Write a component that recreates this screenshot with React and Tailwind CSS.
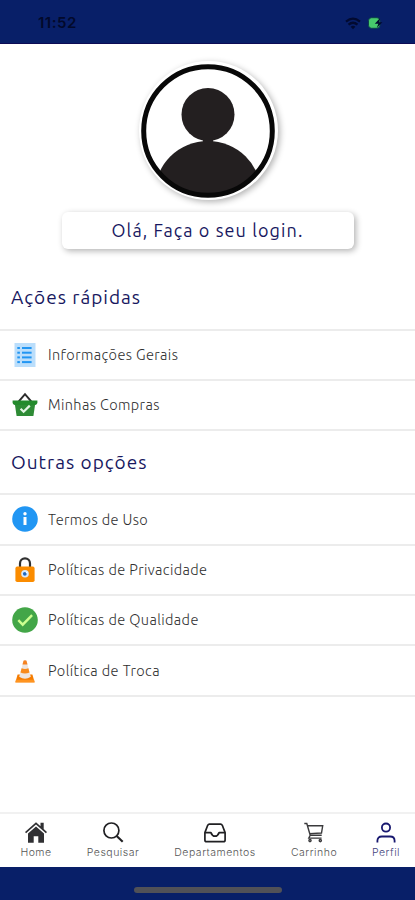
import { useState } from 'react';

/* ─────────── ícones da lista ─────────── */
const ListIcon = () => (
  <svg viewBox="0 0 26 26" className="size-[26px]">
    <rect x="2.5" y="1" width="21" height="24" fill="#bbdefb" />
    <g fill="#2196f3">
      <rect x="5.3" y="5" width="2.6" height="2" />
      <rect x="10" y="5" width="9.6" height="2" />
      <rect x="5.3" y="9.7" width="2.6" height="2" />
      <rect x="10" y="9.7" width="9.6" height="2" />
      <rect x="5.3" y="14.4" width="2.6" height="2" />
      <rect x="10" y="14.4" width="9.6" height="2" />
      <rect x="5.3" y="19.1" width="2.6" height="2" />
      <rect x="10" y="19.1" width="9.6" height="2" />
    </g>
  </svg>
);

const BasketIcon = () => (
  <svg viewBox="0 0 26 26" className="size-[26px]">
    <path d="M6.8 9.4 13 2.2l6.2 7.2" fill="none" stroke="#2b2b2b" strokeWidth="2" />
    <path d="M2.6 10.5h20.8l-2 13.4H4.6z" fill="#2e8b35" />
    <path d="M.6 8.5h24.8v2.6q-.4 1.4-2 1.8H2.6Q1 12.500 .6 11.100z" fill="#238a2c" />
    <path d="m8.6 16.8 3 3 6.2-6.2" fill="none" stroke="#e3f5e4" strokeWidth="2.2" />
  </svg>
);

const InfoIcon = () => (
  <svg viewBox="0 0 26 26" className="size-[26px]">
    <circle cx="13" cy="13" r="12.8" fill="#2196f3" />
    <circle cx="13" cy="7.8" r="1.7" fill="#fff" />
    <rect x="11.5" y="11" width="3" height="8" fill="#fff" />
  </svg>
);

const LockIcon = () => (
  <svg viewBox="0 0 26 26" className="size-[26px]">
    <path d="M8 11V6.4a5 5 0 0 1 10 0V11" fill="none" stroke="#303030" strokeWidth="2.2" />
    <rect x="3.4" y="9.6" width="19.2" height="15.4" rx="1.8" fill="#fb8c00" />
    <circle cx="13" cy="16.8" r="3.8" fill="#d6eaff" />
    <circle cx="12.8" cy="16.8" r="1.9" fill="#2169bd" />
    <circle cx="14.6" cy="15.6" r=".8" fill="#fff" />
  </svg>
);

const CheckIcon = () => (
  <svg viewBox="0 0 26 26" className="size-[26px]">
    <circle cx="13" cy="13" r="12.8" fill="#43a648" />
    <path d="m6.3 13.2 4.4 4.5 9.4-9.6" fill="none" stroke="#ccff90" strokeWidth="2.4" />
  </svg>
);

const ConeIcon = () => (
  <svg viewBox="0 0 26 26" className="size-[26px]">
    <path d="M5.6 16.5h14.8l2.2 7.7H3.4z" fill="#f57c00" />
    <path d="M3.9 21.8h18.2l.5 2.8H3.4z" fill="#ff9420" />
    <path d="M11.8 2.3h2.4L18.8 18.8q-5.8 3.8-11.6 0z" fill="#eee5df" />
    <path d="M11.5 2.8q1.5-1.2 3 0l1 3.7h-5z" fill="#f58220" />
    <path d="M9.6 10.2q3.4 1.5 6.8 0l1.1 4.2q-4.5 2.2-9 0z" fill="#f88a1b" />
  </svg>
);

/* ─────────── ícones do menu inferior ─────────── */
const HomeIcon = () => (
  <svg viewBox="0 0 24 24" className="size-6" fill="#303033">
    <path d="M12 1.2 1 11l1.1 1.3L12 3.6l9.9 8.7L23 11l-3.3-3V1.8h-3.2v3.4z" />
    <path d="M12 5.4 4 12.5v9.3h5.7v-6.6h4.6v6.6H20v-9.3z" />
  </svg>
);

const SearchIcon = () => (
  <svg viewBox="0 0 24 24" className="size-6" fill="none" stroke="#202023" strokeWidth="1.7">
    <circle cx="10.4" cy="9.5" r="7.5" />
    <path d="m15.7 14.9 6 5.8" strokeWidth="2.1" />
  </svg>
);

const InboxIcon = () => (
  <svg viewBox="0 0 24 24" className="size-6" fill="none" stroke="#202023" strokeWidth="1.7" strokeLinejoin="round">
    <path d="M6.4 3.2h11.2q1.1 0 1.7 1.1l2.8 7.3v7.3q0 1.8-1.8 1.8H3.700q-1.800 0-1.800-1.800v-7.300l2.800-7.300q.6-1.100 1.700-1.100z" />
    <path d="M1.900 11.600h6q1.300 3.600 4.100 3.600t4.100-3.600h6" />
  </svg>
);

const CartIcon = () => (
  <svg viewBox="0 0 24 24" className="size-6" fill="none" stroke="#3a3a3c" strokeWidth="1.4">
    <path d="M2.3 2.500h2.500L8.200 14.200h11.500M5.800 4.800h14.900l-1.200 7.200L7.600 12.600M8.200 14.200l-1.400 2.900h12.800" />
    <circle cx="8" cy="19.600" r="1.100" />
    <circle cx="18.300" cy="19.600" r="1.100" />
  </svg>
);

const UserIcon = () => (
  <svg viewBox="0 0 24 24" className="size-6" fill="none" stroke="#18186f" strokeWidth="1.8">
    <circle cx="12" cy="6.600" r="4.100" />
    <path d="M3.400 21.500v-1.700q0-4.300 4.500-4.300h8.200q4.500 0 4.500 4.300v1.700" />
  </svg>
);

/* ─────────── dados ─────────── */
const quick = [
  { label: 'Informações Gerais', Icon: ListIcon },
  { label: 'Minhas Compras', Icon: BasketIcon },
];

const others = [
  { label: 'Termos de Uso', Icon: InfoIcon },
  { label: 'Políticas de Privacidade', Icon: LockIcon },
  { label: 'Políticas de Qualidade', Icon: CheckIcon },
  { label: 'Política de Troca', Icon: ConeIcon },
];

const tabs = [
  { label: 'Home', Icon: HomeIcon, box: 'w-[72px]' },
  { label: 'Pesquisar', Icon: SearchIcon, box: 'w-[82px]' },
  { label: 'Departamentos', Icon: InboxIcon, box: 'w-[122px]' },
  { label: 'Carrinho', Icon: CartIcon, box: 'w-[76px]' },
  { label: 'Perfil', Icon: UserIcon, box: 'w-[63px] pl-[5px]' },
];

const Section = ({ title, items }) => (
  <section>
    <h2 className="h-[62px] pl-[11px] pt-[15.5px] text-[19px] leading-[30px] tracking-[1px] text-[#18185f]">{title}</h2>
    <ul className="border-t-2 border-[#ececec]">
      {items.map(({ label, Icon }) => (
        <li key={label} className="flex h-[50.4px] items-center border-b-2 border-[#ececec] pl-3">
          <Icon />
          <span className="ml-[10px] text-[14.5px] font-light tracking-[0.4px] text-[#303030]">{label}</span>
        </li>
      ))}
    </ul>
  </section>
);

export default function App() {
  const [active, setActive] = useState('Perfil');

  return (
    <div className="flex h-[900px] w-[415px] flex-col overflow-hidden bg-white font-['Ubuntu','Noto_Sans',sans-serif]">
      <header className="flex h-11 shrink-0 items-center justify-between border-b border-[#0d0b55] bg-[#081f68] pl-[38px] pr-[31px] pt-[3px]">
        <span className="font-['Inter',sans-serif] text-[15px] font-semibold tracking-[0.5px] text-[#02092b]">11:52</span>
        <div className="flex items-center gap-[7px]">
          <svg viewBox="0 0 16 13" className="h-[13px] w-4" fill="none" stroke="#020a30" strokeWidth="2.2">
            <path d="M1 4.6q7-5.8 14 0M3.5 7.6q4.5-3.7 9 0" />
            <path d="m5.6 9.7 2.4 2.6 2.4-2.6q-2.4-1.8-4.8 0z" fill="#020a30" stroke="none" />
          </svg>
          <svg viewBox="0 0 16 12" className="h-3 w-4">
            <rect x=".5" y=".7" width="11.5" height="10.6" rx="3" fill="#47c96c" stroke="#0b3f4c" />
            <path d="M12 1 6.8 6.8h3.5L8.8 11l5.6-5.7h-3.2z" fill="#020a30" />
          </svg>
        </div>
      </header>

      <main className="flex-1">
        <div className="flex flex-col items-center pt-[17px]">
          <div className="ml-px size-[139px] rounded-full bg-white p-[2.5px] shadow-[2px_2px_6px_rgba(0,0,0,0.3)]">
            <svg viewBox="0 0 134 134" className="size-[134px]">
              <clipPath id="face"><circle cx="67" cy="67" r="66" /></clipPath>
              <g clipPath="url(#face)" fill="#231f20">
                <circle cx="67" cy="50.5" r="26.5" />
                <ellipse cx="67" cy="129" rx="53" ry="52" />
                <rect x="62" y="74" width="10" height="6" />
              </g>
              <circle cx="67" cy="67" r="64.3" fill="none" stroke="#080808" strokeWidth="5" />
            </svg>
          </div>
          <button className="mt-[12px] h-[37px] w-[292px] rounded-[6px] bg-white text-[18px] leading-[35px] tracking-[1.1px] text-[#18185f] shadow-[2px_2px_6px_rgba(0,0,0,0.3)]">
            Olá, Faça o seu login.
          </button>
        </div>
        <div className="mt-[17.5px]">
          <Section title="Ações rápidas" items={quick} />
          <Section title="Outras opções" items={others} />
        </div>
      </main>

      <nav className="flex h-[55px] shrink-0 border-t-2 border-[#f1f1f1] font-['Inter',sans-serif]">
        {tabs.map(({ label, Icon, box }) => (
          <button
            key={label}
            onClick={() => setActive(label)}
            className={`flex flex-col items-center pt-[7px] ${box}`}
          >
            <Icon />
            <span className={`mt-px text-[10.5px] leading-[14px] font-light tracking-[0.5px] ${active === label ? 'text-[#44447c]' : 'text-[#555555]'}`}>
              {label}
            </span>
          </button>
        ))}
      </nav>

      <footer className="flex h-[33px] shrink-0 justify-center bg-[#081f68] pt-[20px]">
        <div className="h-[6px] w-[148px] rounded-full bg-[#515157]" />
      </footer>
    </div>
  );
}
